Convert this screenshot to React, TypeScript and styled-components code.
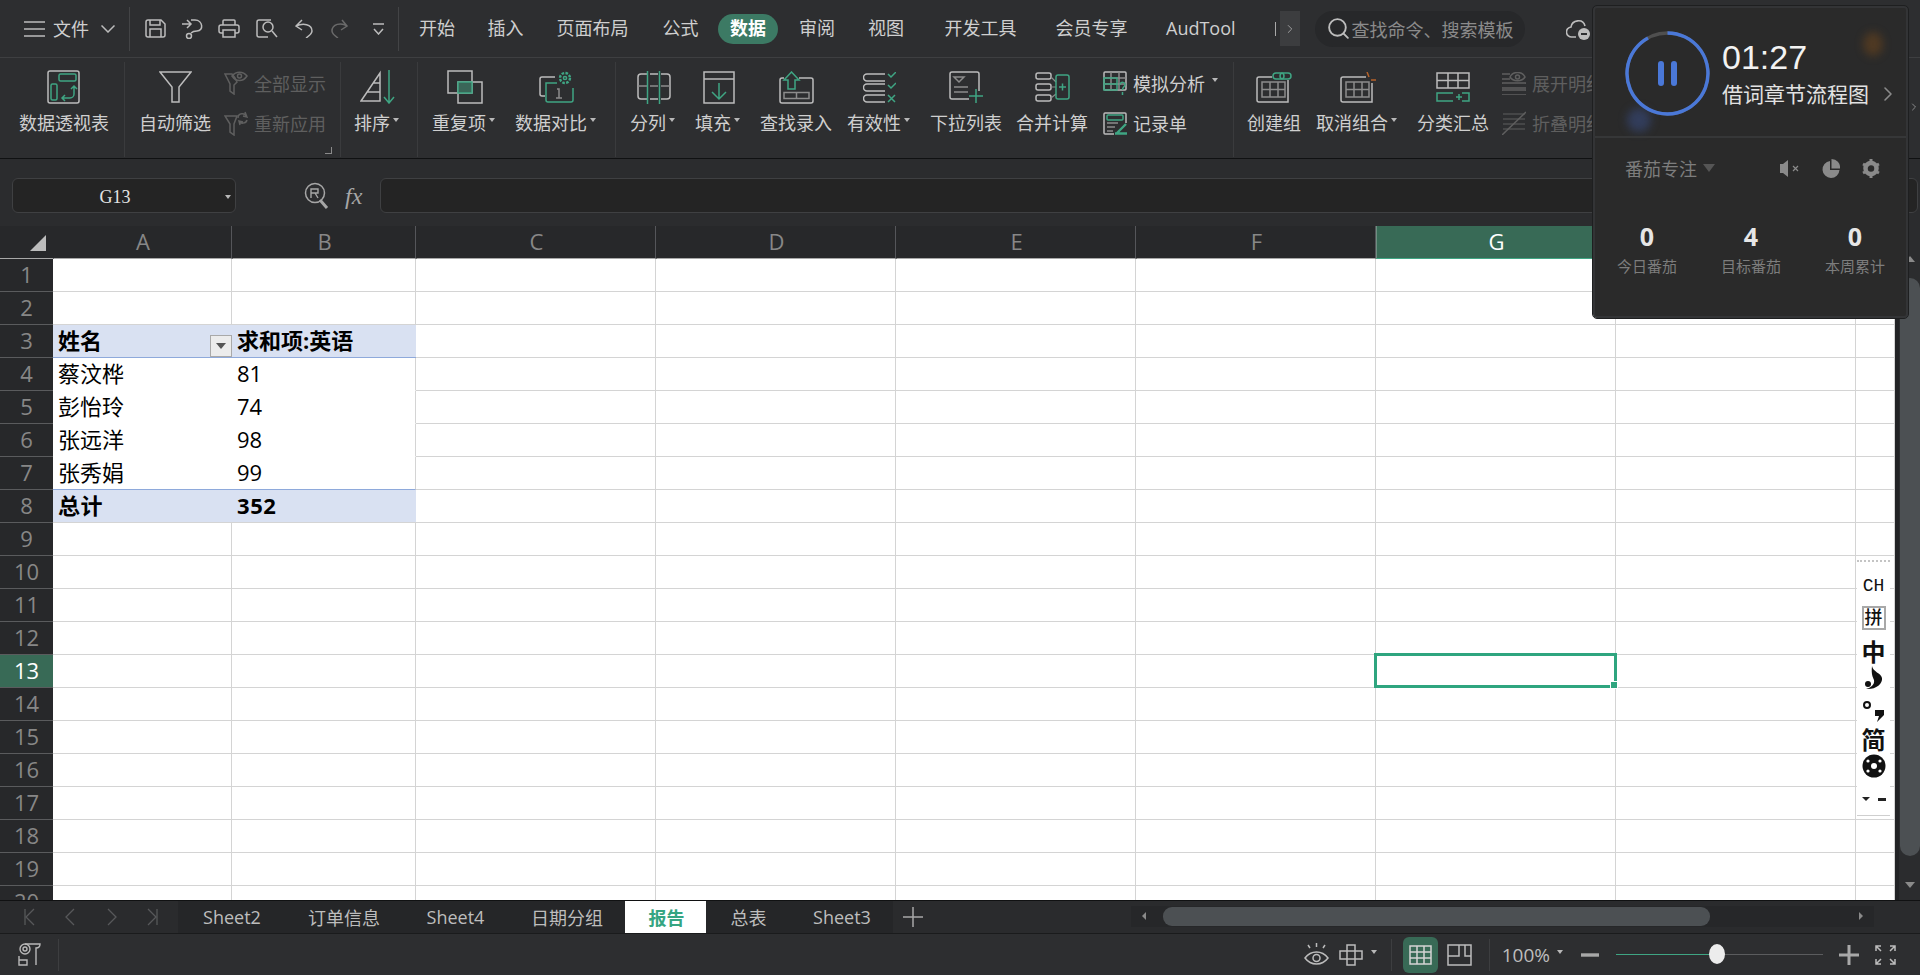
import React from 'react';
import styled, { createGlobalStyle } from 'styled-components';
import { ChevronRight, Search } from 'lucide-react';

const FONT = `"Open Sans", "Noto Sans CJK SC", sans-serif`;
const GREEN = '#3fa583';
const LINE = '#bcbcbc';
const INNER = '#8c8c8c';
const DIM = '#5f5f5f';

const GlobalStyle = createGlobalStyle`
  html, body { margin: 0; padding: 0; background: #2d2e30; }
  * { box-sizing: border-box; }
  body { font-family: ${FONT}; }
`;

const Page = styled.div`
  width: 1920px;
  height: 975px;
  position: relative;
  overflow: hidden;
  display: flex;
  flex-direction: column;
  background: #2d2e30;
  color: #cfcfcf;
  font-size: 18px;
`;

/* ---------- title bar ---------- */
const TitleBar = styled.div`
  height: 58px;
  flex: none;
  display: flex;
  align-items: center;
  padding-left: 24px;
  border-bottom: 1px solid #3e3f41;
`;
const FileLabel = styled.span`
  margin: 0 12px 0 8px;
  line-height: 1;
`;
const TitleSep = styled.i<{ $m: string }>`
  width: 1px;
  height: 44px;
  background: #434446;
  margin: ${(p) => p.$m};
`;
const QatSlot = styled.div<{ $ml: number }>`
  margin-left: ${(p) => p.$ml}px;
  display: flex;
`;
const Tab = styled.span<{ $gap: number; $on?: boolean }>`
  margin-left: ${(p) => p.$gap}px;
  height: 30px;
  line-height: 29px;
  white-space: nowrap;
  color: ${(p) => (p.$on ? '#fff' : '#cfcfcf')};
  font-weight: ${(p) => (p.$on ? 700 : 400)};
  background: ${(p) => (p.$on ? '#3c7a64' : 'transparent')};
  padding: ${(p) => (p.$on ? '0 12px' : '0')};
  border-radius: 15px;
`;
const TabCut = styled.i`
  width: 1px;
  height: 14px;
  margin-left: 39px;
  background: #a8a8a8;
`;
const TabMore = styled.div`
  width: 20px;
  height: 35px;
  margin-left: 4px;
  background: #3c3d3f;
  display: flex;
  align-items: center;
  justify-content: center;
  color: #a8a8a8;
`;
const SearchBox = styled.div`
  width: 210px;
  height: 36px;
  margin-left: 15px;
  border-radius: 18px;
  background: #27282a;
  display: flex;
  align-items: center;
  padding-left: 11px;
  gap: 1px;
  color: #8b8b8b;
  white-space: nowrap;
  svg { color: #bdbdbd; }
`;
const CloudWrap = styled.div`
  margin-left: 41px;
  display: flex;
`;

/* ---------- ribbon ---------- */
const Ribbon = styled.div`
  height: 101px;
  flex: none;
  display: flex;
  align-items: stretch;
  padding: 4px 0 1px;
  border-bottom: 1px solid #101112;
`;
const Group = styled.div<{ $pad: string; $end?: boolean }>`
  display: flex;
  padding: ${(p) => p.$pad};
  border-right: ${(p) => (p.$end ? 'none' : '1px solid #3a3b3d')};
  position: relative;
`;
const BigButton = styled.div<{ $ml?: number }>`
  margin-left: ${(p) => p.$ml ?? 0}px;
  padding-top: 7px;
  display: flex;
  flex-direction: column;
  align-items: center;
  white-space: nowrap;
  svg { display: block; }
`;
const IconSlot = styled.div`
  height: 36px;
  display: flex;
  align-items: center;
`;
const BigLabel = styled.div`
  margin-top: 5px;
  height: 26px;
  line-height: 26px;
  display: flex;
  align-items: center;
`;
const Caret = styled.i<{ $ml?: number; $mr?: number; $c?: string }>`
  display: inline-block;
  width: 0;
  height: 0;
  margin-left: ${(p) => p.$ml ?? 3}px;
  margin-right: ${(p) => p.$mr ?? 2}px;
  margin-top: -6px;
  border-left: 3.5px solid transparent;
  border-right: 3.5px solid transparent;
  border-top: 4px solid ${(p) => p.$c ?? '#b8b8b8'};
`;
const SmallCol = styled.div<{ $ml?: number }>`
  margin-left: ${(p) => p.$ml ?? 0}px;
  padding-top: 3px;
  display: flex;
  flex-direction: column;
  gap: 4px;
`;
const SmallRow = styled.div<{ $dim?: boolean }>`
  height: 36px;
  display: flex;
  align-items: center;
  gap: 6px;
  white-space: nowrap;
  color: ${(p) => (p.$dim ? DIM : '#cfcfcf')};
`;
const Launcher = styled.i`
  position: absolute;
  right: 8px;
  bottom: 3px;
  width: 7px;
  height: 7px;
  border-right: 1px solid #8a8a8a;
  border-bottom: 1px solid #8a8a8a;
`;
const RibbonMore = styled.div`
  position: absolute;
  left: 1908px;
  top: 101px;
  display: flex;
  color: #a8a8a8;
`;

/* ---------- formula bar ---------- */
const FormulaBar = styled.div`
  height: 67px;
  flex: none;
  padding: 19px 2px 0 12px;
  display: flex;
  align-items: flex-start;
  background: #2b2c2e;
`;
const NameBox = styled.div`
  width: 224px;
  height: 35px;
  background: #242424;
  border: 1px solid #3f4042;
  border-radius: 6px;
  display: flex;
  align-items: center;
  justify-content: center;
  position: relative;
  font-family: "Liberation Serif", serif;
  font-size: 18px;
  color: #e4e4e4;
  padding: 3px 18px 0 0;
`;
const NameCaret = styled(Caret)`
  position: absolute;
  right: 4px;
  top: 16px;
  margin: 0;
`;
const FxTools = styled.div`
  width: 144px;
  height: 35px;
  padding-left: 68px;
  display: flex;
  align-items: center;
  gap: 16px;
  color: #a6a6a6;
`;
const FxGlyph = styled.span`
  font-family: "Liberation Serif", serif;
  font-style: italic;
  font-size: 24px;
  line-height: 1;
`;
const FormulaInput = styled.div`
  flex: 1;
  height: 35px;
  background: #242424;
  border: 1px solid #3f4042;
  border-radius: 6px;
`;

/* ---------- sheet ---------- */
const SheetArea = styled.div`
  height: 674px;
  flex: none;
  display: flex;
  position: relative;
`;
const Grid = styled.div`
  width: 1895px;
  height: 674px;
  overflow: hidden;
  display: grid;
  grid-template-columns: 53px 179px 184px 240px 240px 240px 240px 240px 240px 39px;
  grid-auto-rows: 33px;
  background: #fff;
`;
const Corner = styled.div`
  background: #27282a;
  border-bottom: 1px solid #a8a8a8;
  position: relative;
  &::after {
    content: '';
    position: absolute;
    right: 7px;
    bottom: 7px;
    border-left: 16px solid transparent;
    border-bottom: 16px solid #bcbcbc;
  }
`;
const ColHead = styled.div<{ $on?: boolean }>`
  background: ${(p) => (p.$on ? '#386a56' : '#27282a')};
  color: ${(p) => (p.$on ? '#fff' : '#878787')};
  border-left: 1px solid ${(p) => (p.$on ? '#6f8f82' : 'transparent')};
  border-right: 1px solid #55565a;
  border-bottom: 1px solid ${(p) => (p.$on ? GREEN : '#a8a8a8')};
  font-size: 22px;
  line-height: 30px;
  padding-left: 1px;
  text-align: center;
`;
const RowHead = styled.div<{ $on?: boolean }>`
  background: ${(p) => (p.$on ? '#386a56' : '#27282a')};
  color: ${(p) => (p.$on ? '#fff' : '#878787')};
  border-bottom: 1px solid #5a5b5d;
  font-size: 22px;
  line-height: 30px;
  text-align: center;
`;
const Cell = styled.div<{ $kind?: 'band' | 'head' | 'body' | 'last'; $right?: boolean }>`
  position: relative;
  padding-left: 5px;
  font-size: 22px;
  line-height: 30px;
  white-space: nowrap;
  color: #000;
  font-weight: ${(p) => (p.$kind === 'head' || p.$kind === 'band' ? 700 : 400)};
  letter-spacing: ${(p) => (p.$kind === 'band' ? '0.6px' : '0')};
  background: ${(p) => (p.$kind === 'head' || p.$kind === 'band' ? '#d9e1f2' : '#fff')};
  border-right: ${(p) =>
    p.$kind && !p.$right
      ? 'none'
      : p.$kind === 'head' || p.$kind === 'band'
        ? 'none'
        : '1px solid #d4d4d4'};
  border-bottom: 1px solid
    ${(p) =>
      p.$kind === 'head' || p.$kind === 'last'
        ? '#8ea9db'
        : p.$kind === 'band'
          ? '#d4d4d4'
          : p.$kind === 'body'
            ? '#fff'
            : '#d4d4d4'};
`;
const FilterBtn = styled.div`
  position: absolute;
  right: 0;
  bottom: 0;
  width: 22px;
  height: 22px;
  background: #ececec;
  border: 1px solid #a9a9a9;
  display: flex;
  align-items: center;
  justify-content: center;
  &::after {
    content: '';
    border-left: 5px solid transparent;
    border-right: 5px solid transparent;
    border-top: 6px solid #555;
  }
`;
const Selection = styled.div`
  position: absolute;
  left: -2px;
  top: -2px;
  right: -2px;
  bottom: -1px;
  border: 3px solid #2fa57f;
  z-index: 2;
  &::after {
    content: '';
    position: absolute;
    right: -4px;
    bottom: -4px;
    width: 6px;
    height: 6px;
    background: #2fa57f;
    border: 1px solid #fff;
  }
`;
const VScroll = styled.div`
  width: 25px;
  position: relative;
  background: #2b2c2e;
  border-left: 4px solid #232426;
`;
const VThumb = styled.div`
  position: absolute;
  left: 1px;
  right: 0;
  top: 52px;
  height: 578px;
  border-radius: 10px;
  background: #4c5053;
`;
const VArrow = styled.i<{ $up?: boolean }>`
  position: absolute;
  left: 6px;
  top: ${(p) => (p.$up ? '30px' : '656px')};
  border-left: 5px solid transparent;
  border-right: 5px solid transparent;
  ${(p) => (p.$up ? 'border-bottom: 6px solid #8a8a8a;' : 'border-top: 6px solid #8a8a8a;')}
`;

/* IME toolbar floating over the sheet */
const Ime = styled.div`
  position: absolute;
  left: 1857px;
  top: 334px;
  width: 33px;
  height: 256px;
  background: #fff;
  border-top: 2px dotted #c4c4c4;
  border-bottom: 1px solid #cfcfcf;
  display: flex;
  flex-direction: column;
  align-items: center;
  color: #111;
  font-weight: 700;
`;
const ImeMono = styled.div`
  margin-top: 14px;
  font-family: "Liberation Mono", monospace;
  font-size: 18px;
  line-height: 20px;
  font-weight: 400;
`;
const ImeBox = styled.div`
  margin-top: 10px;
  width: 24px;
  height: 24px;
  border: 2px solid #a8a8a8;
  font-size: 18px;
  line-height: 19px;
  text-align: center;
  font-weight: 500;
`;
const ImeGlyph = styled.div<{ $mt?: number }>`
  margin-top: ${(p) => p.$mt ?? 0}px;
  font-size: 24px;
  line-height: 28px;
  font-family: "Noto Sans CJK SC", sans-serif;
`;
const ImeSlot = styled.div<{ $mt?: number }>`
  margin-top: ${(p) => p.$mt ?? 0}px;
  display: flex;
`;
const ImeFoot = styled.div`
  margin-top: 18px;
  display: flex;
  gap: 8px;
  align-items: center;
  &::before {
    content: '';
    border-left: 4px solid transparent;
    border-right: 4px solid transparent;
    border-top: 4px solid #222;
  }
  &::after {
    content: '';
    width: 8px;
    height: 3px;
    margin-top: 2px;
    background: #222;
  }
`;

/* ---------- sheet tabs ---------- */
const TabBar = styled.div`
  height: 34px;
  flex: none;
  display: flex;
  align-items: stretch;
  background: #2a2b2d;
  border-top: 1px solid #101112;
  border-bottom: 1px solid #1a1b1c;
`;
const TabNav = styled.div`
  width: 178px;
  padding-left: 24px;
  display: flex;
  align-items: center;
  gap: 26px;
`;
const SheetTab = styled.div<{ $w: number; $on?: boolean }>`
  width: ${(p) => p.$w}px;
  padding-left: 2px;
  display: flex;
  align-items: center;
  justify-content: center;
  white-space: nowrap;
  background: ${(p) => (p.$on ? '#fff' : '#252628')};
  color: ${(p) => (p.$on ? '#35a582' : '#bdbdbd')};
  font-weight: ${(p) => (p.$on ? 700 : 400)};
  height: ${(p) => (p.$on ? '32px' : 'auto')};
`;
const AddTab = styled.div`
  width: 40px;
  display: flex;
  align-items: center;
  justify-content: center;
`;
const HScroll = styled.div`
  position: absolute;
  left: 1131px;
  top: 906px;
  width: 743px;
  height: 21px;
  background: #262729;
`;
const HThumb = styled.div`
  position: absolute;
  left: 32px;
  top: 1px;
  width: 547px;
  height: 19px;
  border-radius: 9px;
  background: #4c5053;
`;
const HArrow = styled.i<{ $right?: boolean }>`
  position: absolute;
  top: 6px;
  ${(p) => (p.$right ? 'right: 11px;' : 'left: 11px;')}
  border-top: 4px solid transparent;
  border-bottom: 4px solid transparent;
  ${(p) => (p.$right ? 'border-left: 4px solid #8a8a8a;' : 'border-right: 4px solid #8a8a8a;')}
`;

/* ---------- status bar ---------- */
const StatusBar = styled.div`
  flex: 1;
  display: flex;
  align-items: center;
  padding: 0 23px 0 17px;
  color: #bdbdbd;
`;
const StatusSep = styled.i<{ $mx?: string }>`
  width: 1px;
  height: 32px;
  background: #3d3e40;
  margin: ${(p) => p.$mx ?? '0'};
`;
const Spacer = styled.div`
  flex: 1;
`;
const StatusItem = styled.div<{ $ml?: number }>`
  margin-left: ${(p) => p.$ml ?? 0}px;
  display: flex;
`;
const ViewBtn = styled.div<{ $on?: boolean }>`
  width: 35px;
  height: 36px;
  border-radius: 6px;
  background: ${(p) => (p.$on ? '#386a56' : 'transparent')};
  display: flex;
  align-items: center;
  justify-content: center;
`;
const ZoomText = styled.span`
  font-size: 19px;
  color: #bdbdbd;
`;
const SliderTrack = styled.div`
  width: 207px;
  height: 1px;
  margin: 0 16px 0 17px;
  background: #5b5c5e;
  position: relative;
`;
const SliderFill = styled.div`
  position: absolute;
  left: 0;
  top: 0;
  height: 1px;
  background: ${GREEN};
`;
const SliderKnob = styled.div`
  position: absolute;
  top: -10px;
  width: 16px;
  height: 20px;
  margin-left: -8px;
  border-radius: 50%;
  background: #ececec;
`;

/* ---------- pomodoro panel, floats over the ribbon ---------- */
const Panel = styled.div`
  position: absolute;
  left: 1593px;
  top: 6px;
  width: 315px;
  height: 312px;
  background: #2a2a2a;
  border: 2px solid #333436;
  border-radius: 4px;
  outline: 1px solid #1e1f20;
  z-index: 5;
  overflow: hidden;
`;
const PanelGlow = styled.i<{ $c: string; $l: number; $t: number; $w: number }>`
  position: absolute;
  left: ${(p) => p.$l}px;
  top: ${(p) => p.$t}px;
  width: ${(p) => p.$w}px;
  height: 24px;
  border-radius: 50%;
  background: ${(p) => p.$c};
  filter: blur(4px);
`;
const PanelTop = styled.div`
  height: 130px;
  padding: 2px 0 0 30px;
  display: flex;
  align-items: center;
  gap: 12px;
  border-bottom: 2px solid #363738;
  position: relative;
`;
const Timer = styled.div`
  font-family: "Liberation Sans", sans-serif;
  font-size: 34px;
  line-height: 38px;
  color: #f2f2f2;
`;
const TaskRow = styled.div`
  margin-top: 4px;
  display: flex;
  align-items: center;
  gap: 7px;
  font-size: 21px;
  line-height: 28px;
  color: #e2e2e2;
  white-space: nowrap;
  svg { color: #8a8a8a; }
`;
const ModeRow = styled.div`
  height: 60px;
  padding: 0 26px 0 30px;
  display: flex;
  align-items: center;
  color: #7d7d7d;
`;
const ModeCaret = styled(Caret)`
  margin: 0 auto 0 6px;
  border-left-width: 6px;
  border-right-width: 6px;
  border-top-width: 8px;
`;
const ModeIcons = styled.div`
  display: flex;
  align-items: center;
  gap: 22px;
  color: #8a8a8a;
`;
const Stats = styled.div`
  margin-top: 21px;
  display: grid;
  grid-template-columns: repeat(3, 104px);
  text-align: center;
`;
const StatNum = styled.div`
  font-size: 25px;
  line-height: 34px;
  font-weight: 700;
  color: #e6e6e6;
`;
const StatLabel = styled.div`
  margin-top: 2px;
  font-size: 15px;
  line-height: 22px;
  color: #7d7d7d;
`;

/* ---------- drawings ---------- */
const Ico: React.FC<{ w: number; h: number; c?: string; sw?: number; children: React.ReactNode }> = ({
  w, h, c = LINE, sw = 1.5, children,
}) => (
  <svg width={w} height={h} viewBox={`0 0 ${w} ${h}`} fill="none" stroke={c} strokeWidth={sw}>
    {children}
  </svg>
);

const icons: Record<string, React.ReactNode> = {
  pivot: (
    <Ico w={34} h={36}>
      <rect x="1" y="2" width="31" height="32" rx="2" />
      <g stroke={GREEN}>
        <rect x="12" y="5" width="17" height="7" rx="1.5" />
        <rect x="4" y="15" width="6" height="16" rx="1.5" />
        <path d="M15 29h8a4 4 0 0 0 4-4v-7M24 20l3-3 3 3M18 26l-3 3 3 3" />
      </g>
    </Ico>
  ),
  filter: (
    <Ico w={33} h={32}>
      <path d="M1 1h31L20 16v15h-7V16z" />
    </Ico>
  ),
  sort: (
    <Ico w={36} h={34}>
      <path d="M1 31L20 3v28zM13 13h7M7 22h13" />
      <path stroke={GREEN} d="M29 0v33M24 27l5 6 5-6" />
    </Ico>
  ),
  dup: (
    <Ico w={36} h={34}>
      <rect x="1" y="1" width="24" height="22" />
      <rect x="11" y="12" width="24" height="21" />
      <rect x="11" y="12" width="14" height="11" fill="#3a6658" stroke={GREEN} />
    </Ico>
  ),
  compare: (
    <Ico w={36} h={33}>
      <path d="M16 6H3a2 2 0 0 0-2 2v15a2 2 0 0 0 2 2h3" />
      <path stroke={GREEN} d="M18 12H7v17a2 2 0 0 0 2 2h23a2 2 0 0 0 2-2V17" />
      <path stroke={INNER} d="M18 18h2v9M17 27h6" />
      <circle cx="26" cy="7" r="5" stroke={GREEN} strokeWidth="2.4" strokeDasharray="2.6 1.3" />
      <circle cx="26" cy="7" r="1.6" stroke={GREEN} />
    </Ico>
  ),
  split: (
    <Ico w={35} h={33}>
      <path d="M11 3H5a3 3 0 0 0-3 3v19a3 3 0 0 0 3 3h6M14 3h8M14 28h8M25 3h6a3 3 0 0 1 3 3v19a3 3 0 0 1-3 3h-6" />
      <path stroke={INNER} d="M2 15h9M14 15h8M25 15h9" />
      <path stroke={GREEN} d="M11.5 0v33M23.5 0v33" />
    </Ico>
  ),
  fill: (
    <Ico w={32} h={33}>
      <rect x="1" y="1" width="30" height="31" />
      <path d="M1 8h30" />
      <path stroke={GREEN} d="M16 12v16M9 21l7 7 7-7" />
    </Ico>
  ),
  lookup: (
    <Ico w={35} h={33}>
      <path d="M5 7H3a2 2 0 0 0-2 2v21a2 2 0 0 0 2 2h29a2 2 0 0 0 2-2V9a2 2 0 0 0-2-2H20" />
      <path stroke={INNER} d="M5 21.5h25v6H5zM17.5 21.5v6" />
      <path stroke={GREEN} d="M12.5 1L20 9h-4v9H9V9H5z" />
    </Ico>
  ),
  validity: (
    <Ico w={33} h={31}>
      <path d="M22 2H4a3.5 3.5 0 0 0 0 7h18M22 12H4a3.5 3.5 0 0 0 0 7h18M22 23H4a3.5 3.5 0 0 0 0 7h18" />
      <path stroke={GREEN} d="M25 2l3 3 5-5M25 13l3 3 5-5M25 23l7 7M32 23l-7 7" />
    </Ico>
  ),
  dropdown: (
    <Ico w={35} h={32}>
      <path d="M30 20V3a2 2 0 0 0-2-2H3a2 2 0 0 0-2 2v23a2 2 0 0 0 2 2h17" />
      <path stroke={INNER} d="M5 6h10l-5 5zM5 16h14M5 21h14" />
      <path stroke={GREEN} d="M27 18v14M20 25h14" />
    </Ico>
  ),
  merge: (
    <Ico w={35} h={30}>
      <rect x="1" y="1" width="15" height="6" rx="2" />
      <rect x="1" y="12" width="15" height="6" rx="2" />
      <rect x="1" y="23" width="15" height="6" rx="2" />
      <path stroke={INNER} d="M16 5l5 5M16 15h5M16 26l5-4" strokeWidth="1.2" />
      <rect x="21" y="3" width="13" height="24" rx="2" stroke={GREEN} />
      <path stroke={GREEN} d="M24 15h7M27.5 11.5v7" />
    </Ico>
  ),
  whatif: (
    <Ico w={24} h={24}>
      <rect x="1" y="1" width="22" height="18" rx="1" />
      <path stroke={INNER} d="M1 7h22M1 13h22M8 1v18M16 1v18" />
      <path stroke={GREEN} d="M1 7h13v12H1zM1 13h13" />
      <path stroke={GREEN} d="M17 14c0-4 6-3 5 0-.5 2-2.500 2-2.500 5M19.500 21v3" />
    </Ico>
  ),
  record: (
    <Ico w={24} h={23}>
      <path d="M23 11V2a1 1 0 0 0-1-1H2a1 1 0 0 0-1 1v19a1 1 0 0 0 1 1h9" />
      <rect x="4" y="3" width="16" height="5" rx="1" stroke={GREEN} />
      <path stroke={INNER} d="M4 11h11M4 15h8M4 19h6" />
      <path stroke={GREEN} d="M12 21.500h12M14 21l9-9" strokeWidth="2.4" />
    </Ico>
  ),
  group: (
    <Ico w={36} h={31}>
      <path d="M16 5H3a2 2 0 0 0-2 2v21a2 2 0 0 0 2 2h29V8" />
      <path stroke={INNER} d="M6 10h23v15H6zM6 17.500h23M14 10v15M22 10v15" />
      <g stroke={GREEN}>
        <rect x="17" y="1" width="11" height="6" rx="3" />
        <rect x="24" y="1" width="11" height="6" rx="3" />
      </g>
    </Ico>
  ),
  ungroup: (
    <Ico w={36} h={31}>
      <path d="M26 5H3a2 2 0 0 0-2 2v21a2 2 0 0 0 2 2h29V11" />
      <path stroke={INNER} d="M6 10h23v15H6zM6 17.500h23M14 10v15M22 10v15" />
      <path d="M27 0l2 5M31 8h5" stroke="#b5622a" />
    </Ico>
  ),
  subtotal: (
    <Ico w={34} h={30}>
      <rect x="1" y="1" width="32" height="15" />
      <path d="M1 8.500h32M12 1v15M22 1v15" />
      <path stroke={GREEN} d="M17 21H1v8h16M26 21h7v8h-7M20 25h6M23 22v6" />
    </Ico>
  ),
  showAll: (
    <Ico w={24} h={24} c={DIM}>
      <path d="M1 3h7l3 4 2 4-3 3v9l-4-3v-7z" />
      <path d="M8 5c4-5 11-5 15 0-4 6-11 6-15 0z" />
      <circle cx="15.500" cy="5" r="2" />
    </Ico>
  ),
  reapply: (
    <Ico w={24} h={26} c={DIM}>
      <path d="M1 6h12l-3 8v11l-4-3v-8z" />
      <path d="M14 8c0-5 7-6 9-1M23 10c-1 4-7 4-8 1M21 2l2 5-4-1M16 15l-1-4 4 1" />
    </Ico>
  ),
  expand: (
    <Ico w={24} h={23} c={DIM}>
      <path d="M0 2h8M0 7h8M1 11h22a2 2 0 0 1 0 5H1a2 2 0 0 1 0-5zM1 18h22a2 2 0 0 1 0 5H1a2 2 0 0 1 0-5z" />
      <path d="M8 5c3-6 12-6 15 0-3 5-12 5-15 0z" />
      <circle cx="15.500" cy="5" r="2" />
    </Ico>
  ),
  collapse: (
    <Ico w={24} h={24} c={DIM}>
      <path d="M1 3h22M1 8h22M1 13h22M1 18h22" strokeWidth="1.2" />
      <path d="M0 24L24 1" />
    </Ico>
  ),
};

const MenuIcon = () => (
  <Ico w={21} h={16} sw={1.6}>
    <path d="M0 1h21M0 8h21M0 15h21" />
  </Ico>
);
const DownIcon = () => (
  <Ico w={14} h={8}>
    <path d="M0.500 0.500L7 7l6.500-6.500" />
  </Ico>
);
const SaveIcon = () => (
  <Ico w={21} h={19}>
    <path d="M3 1h13l4 4v11a2 2 0 0 1-2 2H3a2 2 0 0 1-2-2V3a2 2 0 0 1 2-2z" />
    <path d="M5 1v5h10V1M5 18v-8h11v8" />
  </Ico>
);
const ExportIcon = () => (
  <Ico w={21} h={20}>
    <path d="M0 5h9M5 1l4 4-4 4M9 1h4c8 0 9 11 2 11-3 0-5 1-6 2" />
    <circle cx="7" cy="17" r="2.500" />
  </Ico>
);
const PrintIcon = () => (
  <Ico w={22} h={19}>
    <path d="M5 6V2a1 1 0 0 1 1-1h10a1 1 0 0 1 1 1v4" />
    <path d="M5 14H3a2 2 0 0 1-2-2V8a2 2 0 0 1 2-2h16a2 2 0 0 1 2 2v4a2 2 0 0 1-2 2h-2" />
    <path d="M5 11h12v7H5z" />
  </Ico>
);
const PreviewIcon = () => (
  <Ico w={22} h={19}>
    <path d="M12 18H3a2 2 0 0 1-2-2V3a2 2 0 0 1 2-2h12" />
    <circle cx="12" cy="8" r="5" />
    <path d="M16 12l5 6" />
  </Ico>
);
const UndoIcon = () => (
  <Ico w={18} h={19}>
    <path d="M7 1L1 7l6 4M1 7c7-3 16-2 16 5 0 3-3 5-6 7" />
  </Ico>
);
const RedoIcon = () => (
  <Ico w={17} h={19} c="#6a6a6a">
    <path d="M11 1l5 6-6 4M16 7C10 3 1 5 1 12c0 3 3 5 6 7" />
  </Ico>
);
const MoreIcon = () => (
  <Ico w={11} h={12}>
    <path d="M0 1h11M1 6l4.500 5L10 6" />
  </Ico>
);
const CloudIcon = () => (
  <svg width="25" height="24" viewBox="0 0 25 24" fill="none" stroke="#bdbdbd" strokeWidth="1.6">
    <path d="M10 20H6a5 5 0 0 1-1-10C6 3 17 1 19 9" />
    <circle cx="18" cy="17" r="6" fill="#bdbdbd" stroke="none" />
    <path d="M15 17h6" stroke="#2d2e30" strokeWidth="2" />
  </svg>
);
const FormulaSearch = () => (
  <Ico w={25} h={27} c="#a6a6a6">
    <circle cx="11" cy="11" r="9.500" />
    <path d="M16 18l7 8" strokeWidth="3" />
    <path d="M7 16V7h7v4H7M11 11l3 5" strokeWidth="1.4" />
  </Ico>
);
const PrintRoll = () => (
  <Ico w={24} h={23} c="#b8b8b8" sw={1.4}>
    <circle cx="8" cy="6" r="5" />
    <circle cx="8" cy="6" r="2" />
    <path d="M8 1h15c0 3-2 4-4 4v17M2 18v-5M2 17h8v5H2z" />
  </Ico>
);
const EyeIcon = () => (
  <Ico w={25} h={23}>
    <path d="M1 15c6-8 17-8 23 0-6 8-17 8-23 0z" />
    <circle cx="12.500" cy="15" r="3.500" />
    <path d="M12.500 0v4M4 2l2 3M21 2l-2 3" />
  </Ico>
);
const CrossView = () => (
  <Ico w={24} h={22}>
    <path d="M8 1h8v6h7v8h-7v6H8v-6H1V7h7zM8 7h8v8H8z" />
  </Ico>
);
const GridView = () => (
  <Ico w={23} h={20} c="#d4d4d4">
    <rect x="1" y="1" width="21" height="18" />
    <path d="M1 7h21M1 13h21M8 1v18M15 1v18" />
  </Ico>
);
const PageView = () => (
  <Ico w={25} h={22}>
    <rect x="1" y="1" width="23" height="20" />
    <path d="M1 12h11V1M18 1v11h6" />
  </Ico>
);
const FullScreen = () => (
  <Ico w={23} h={22}>
    <path d="M2 7V2h5M2 2l5 5M21 7V2h-5M21 2l-5 5M2 15v5h5M2 20l5-5M21 15v5h-5M21 20l-5-5" />
  </Ico>
);
const NavIcon: React.FC<{ flip?: boolean; bar?: boolean }> = ({ flip, bar }) => (
  <svg width="14" height="18" viewBox="0 0 14 18" fill="none" stroke="#57585a" strokeWidth="1.3" style={flip ? { transform: 'scaleX(-1)' } : undefined}>
    <path d="M4 1l8 8-8 8" />
    {bar && <path d="M13 1v16" />}
  </svg>
);
const PauseRing = () => (
  <svg width="85" height="85" viewBox="0 0 85 85" fill="none" strokeWidth="3.4">
    <circle cx="42.500" cy="42.500" r="40.500" stroke="#4f4f4f" />
    <path d="M42.500 2A40.500 40.500 0 1 1 23 7" stroke="#4a78d8" />
    <rect x="33" y="30" width="6" height="25" rx="3" fill="#4a78d8" stroke="none" />
    <rect x="46" y="30" width="6" height="25" rx="3" fill="#4a78d8" stroke="none" />
  </svg>
);
const MuteIcon = () => (
  <svg width="21" height="17" viewBox="0 0 21 17" fill="currentColor">
    <path d="M1 4h3l5-4v17l-5-4H1z" />
    <path d="M14 6l5 5M19 6l-5 5" stroke="currentColor" strokeWidth="1.2" />
  </svg>
);
const PieIcon = () => (
  <svg width="18" height="19" viewBox="0 0 18 19" fill="currentColor">
    <path d="M8 2v9h9.500a8.500 8.500 0 1 1-9.500-9z" />
    <path d="M9.500 0A8.500 8.500 0 0 1 18 9.500H9.500z" />
  </svg>
);
const GearIcon = () => (
  <svg width="18" height="19" viewBox="0 0 18 19" fill="none" stroke="currentColor">
    <circle cx="9" cy="9.500" r="5.500" strokeWidth="4.500" />
    <path d="M9 0v3M9 16v3M1 5l2 1M15 13l2 1M1 14l2-1M15 6l2-1" strokeWidth="3" />
  </svg>
);
const ImeNote = () => (
  <svg width="22" height="26" viewBox="0 0 22 26" fill="#111">
    <path d="M9 1c1 6 9 7 10 12 1 6-7 12-16 11 4-1 9-4 8-9-1-3-3-5-2-14z" />
    <circle cx="5" cy="19" r="3" />
  </svg>
);
const ImeMark = () => (
  <svg width="26" height="24" viewBox="0 0 26 24" fill="#111">
    <circle cx="6" cy="6" r="3" fill="none" stroke="#111" strokeWidth="2" />
    <path d="M14 11h9v5l-7 7 2-6h-4z" />
  </svg>
);
const ImeFlower = () => (
  <svg width="24" height="24" viewBox="0 0 24 24" fill="#111">
    <circle cx="12" cy="12" r="11.500" />
    <circle cx="12" cy="12" r="3" fill="#fff" />
    <circle cx="6" cy="7" r="1.600" fill="#fff" />
    <circle cx="18" cy="7" r="1.600" fill="#fff" />
    <circle cx="6" cy="17" r="1.600" fill="#fff" />
    <circle cx="18" cy="17" r="1.600" fill="#fff" />
  </svg>
);

/* ---------- data ---------- */
const tabs = [
  { label: '开始', gap: 20 },
  { label: '插入', gap: 32.5 },
  { label: '页面布局', gap: 33 },
  { label: '公式', gap: 34 },
  { label: '数据', gap: 19.5, on: true },
  { label: '审阅', gap: 21 },
  { label: '视图', gap: 33 },
  { label: '开发工具', gap: 40.5 },
  { label: '会员专享', gap: 39 },
  { label: 'AudTool', gap: 38.5 },
];
const qat = [
  { ml: 0, icon: <SaveIcon /> },
  { ml: 16, icon: <ExportIcon /> },
  { ml: 15, icon: <PrintIcon /> },
  { ml: 16, icon: <PreviewIcon /> },
  { ml: 17, icon: <UndoIcon /> },
  { ml: 18, icon: <RedoIcon /> },
  { ml: 25, icon: <MoreIcon /> },
];
const sheets = [
  { name: 'Sheet2', w: 106 },
  { name: '订单信息', w: 118 },
  { name: 'Sheet4', w: 105 },
  { name: '日期分组', w: 118 },
  { name: '报告', w: 81, on: true },
  { name: '总表', w: 83 },
  { name: 'Sheet3', w: 104 },
];
const columns = ['A', 'B', 'C', 'D', 'E', 'F', 'G', 'H', ''];
const pivot: Record<number, { a: string; b: string; kind: 'band' | 'head' | 'body' | 'last' }> = {
  3: { a: '姓名', b: '求和项:英语', kind: 'head' },
  4: { a: '蔡汶桦', b: '81', kind: 'body' },
  5: { a: '彭怡玲', b: '74', kind: 'body' },
  6: { a: '张远洋', b: '98', kind: 'body' },
  7: { a: '张秀娟', b: '99', kind: 'last' },
  8: { a: '总计', b: '352', kind: 'band' },
};

const Big: React.FC<{ icon: string; label: string; caret?: boolean; ml?: number }> = ({ icon, label, caret, ml }) => (
  <BigButton $ml={ml}>
    <IconSlot>{icons[icon]}</IconSlot>
    <BigLabel>
      {label}
      {caret && <Caret />}
    </BigLabel>
  </BigButton>
);

const App = () => {
  const rows = Array.from({ length: 20 }, (_, i) => i + 1);

  return (
    <Page>
      <GlobalStyle />
      <TitleBar>
        <MenuIcon />
        <FileLabel>文件</FileLabel>
        <DownIcon />
        <TitleSep $m="0 15px 0 14px" />
        {qat.map((q, i) => (
          <QatSlot key={i} $ml={q.ml}>
            {q.icon}
          </QatSlot>
        ))}
        <TitleSep $m="0 0 0 14px" />
        {tabs.map((t) => (
          <Tab key={t.label} $gap={t.gap} $on={t.on}>
            {t.label}
          </Tab>
        ))}
        <TabCut />
        <TabMore>
          <ChevronRight size={14} strokeWidth={1.5} />
        </TabMore>
        <SearchBox>
          <Search size={25} strokeWidth={1.8} />
          查找命令、搜索模板
        </SearchBox>
        <CloudWrap>
          <CloudIcon />
        </CloudWrap>
      </TitleBar>

      <Ribbon>
        <Group $pad="0 15px 0 19px">
          <Big icon="pivot" label="数据透视表" />
        </Group>
        <Group $pad="0 14px">
          <Big icon="filter" label="自动筛选" />
          <SmallCol $ml={13}>
            <SmallRow $dim>{icons.showAll}全部显示</SmallRow>
            <SmallRow $dim>{icons.reapply}重新应用</SmallRow>
          </SmallCol>
          <Launcher />
        </Group>
        <Group $pad="0 16px 0 13px">
          <Big icon="sort" label="排序" caret />
        </Group>
        <Group $pad="0 17px 0 14px">
          <Big icon="dup" label="重复项" caret />
          <Big icon="compare" label="数据对比" caret ml={18} />
        </Group>
        <Group $pad="0 13px 0 14px">
          <Big icon="split" label="分列" caret />
          <Big icon="fill" label="填充" caret ml={18} />
          <Big icon="lookup" label="查找录入" ml={18} />
          <Big icon="validity" label="有效性" caret ml={15} />
          <Big icon="dropdown" label="下拉列表" ml={18} />
          <Big icon="merge" label="合并计算" ml={14} />
          <SmallCol $ml={15}>
            <SmallRow>
              {icons.whatif}模拟分析
              <Caret $ml={1} />
            </SmallRow>
            <SmallRow>{icons.record}记录单</SmallRow>
          </SmallCol>
        </Group>
        <Group $pad="0 0 0 13px" $end>
          <Big icon="group" label="创建组" />
          <Big icon="ungroup" label="取消组合" caret ml={15} />
          <Big icon="subtotal" label="分类汇总" ml={18} />
          <SmallCol $ml={13}>
            <SmallRow $dim>{icons.expand}展开明细</SmallRow>
            <SmallRow $dim>{icons.collapse}折叠明细</SmallRow>
          </SmallCol>
        </Group>
      </Ribbon>
      <RibbonMore>
        <ChevronRight size={12} strokeWidth={1.5} />
      </RibbonMore>

      <FormulaBar>
        <NameBox>
          G13
          <NameCaret />
        </NameBox>
        <FxTools>
          <FormulaSearch />
          <FxGlyph>fx</FxGlyph>
        </FxTools>
        <FormulaInput />
      </FormulaBar>

      <SheetArea>
        <Grid>
          <Corner />
          {columns.map((c, i) => (
            <ColHead key={i} $on={c === 'G'}>
              {c}
            </ColHead>
          ))}
          {rows.map((r) => (
            <React.Fragment key={r}>
              <RowHead $on={r === 13}>{r}</RowHead>
              {columns.map((c, i) => {
                const row = pivot[r];
                if (row && i < 2) {
                  return (
                    <Cell key={i} $kind={row.kind} $right={i === 1}>
                      {i === 0 ? row.a : row.b}
                      {r === 3 && i === 0 && <FilterBtn />}
                    </Cell>
                  );
                }
                return <Cell key={i}>{r === 13 && c === 'G' && <Selection />}</Cell>;
              })}
            </React.Fragment>
          ))}
        </Grid>
        <VScroll>
          <VArrow $up />
          <VThumb />
          <VArrow />
        </VScroll>
        <Ime>
          <ImeMono>CH</ImeMono>
          <ImeBox>拼</ImeBox>
          <ImeGlyph $mt={7}>中</ImeGlyph>
          <ImeSlot>
            <ImeNote />
          </ImeSlot>
          <ImeSlot $mt={8}>
            <ImeMark />
          </ImeSlot>
          <ImeGlyph $mt={2}>简</ImeGlyph>
          <ImeSlot $mt={1}>
            <ImeFlower />
          </ImeSlot>
          <ImeFoot />
        </Ime>
      </SheetArea>

      <TabBar>
        <TabNav>
          <NavIcon flip bar />
          <NavIcon flip />
          <NavIcon />
          <NavIcon bar />
        </TabNav>
        {sheets.map((s) => (
          <SheetTab key={s.name} $w={s.w} $on={s.on}>
            {s.name}
          </SheetTab>
        ))}
        <AddTab>
          <Ico w={20} h={20} c="#a8a8a8">
            <path d="M10 0v20M0 10h20" />
          </Ico>
        </AddTab>
      </TabBar>
      <HScroll>
        <HArrow />
        <HThumb />
        <HArrow $right />
      </HScroll>

      <StatusBar>
        <PrintRoll />
        <StatusSep $mx="0 0 0 17px" />
        <Spacer />
        <EyeIcon />
        <StatusItem $ml={10}>
          <CrossView />
        </StatusItem>
        <Caret $ml={8} $mr={0} />
        <StatusSep $mx="0 11px 0 14px" />
        <ViewBtn $on>
          <GridView />
        </ViewBtn>
        <StatusItem $ml={9}>
          <PageView />
        </StatusItem>
        <StatusSep $mx="0 12px 0 17px" />
        <ZoomText>100%</ZoomText>
        <Caret $ml={7} $mr={18} />
        <Ico w={18} h={4} sw={3.4} c="#a8a8a8">
          <path d="M0 2h18" />
        </Ico>
        <SliderTrack>
          <SliderFill style={{ width: 101 }} />
          <SliderKnob style={{ left: 101 }} />
        </SliderTrack>
        <Ico w={20} h={20} sw={3} c="#a8a8a8">
          <path d="M10 0v20M0 10h20" />
        </Ico>
        <StatusItem $ml={15}>
          <FullScreen />
        </StatusItem>
      </StatusBar>

      <Panel>
        <PanelGlow $c="rgba(150,85,20,0.35)" $l={268} $t={24} $w={20} />
        <PanelGlow $c="rgba(60,85,150,0.45)" $l={32} $t={100} $w={24} />
        <PanelTop>
          <PauseRing />
          <div>
            <Timer>01:27</Timer>
            <TaskRow>
              借词章节流程图
              <ChevronRight size={24} strokeWidth={1.6} />
            </TaskRow>
          </div>
        </PanelTop>
        <ModeRow>
          番茄专注
          <ModeCaret $c="#555" />
          <ModeIcons>
            <MuteIcon />
            <PieIcon />
            <GearIcon />
          </ModeIcons>
        </ModeRow>
        <Stats>
          <div>
            <StatNum>0</StatNum>
            <StatLabel>今日番茄</StatLabel>
          </div>
          <div>
            <StatNum>4</StatNum>
            <StatLabel>目标番茄</StatLabel>
          </div>
          <div>
            <StatNum>0</StatNum>
            <StatLabel>本周累计</StatLabel>
          </div>
        </Stats>
      </Panel>
    </Page>
  );
};

export default App;
